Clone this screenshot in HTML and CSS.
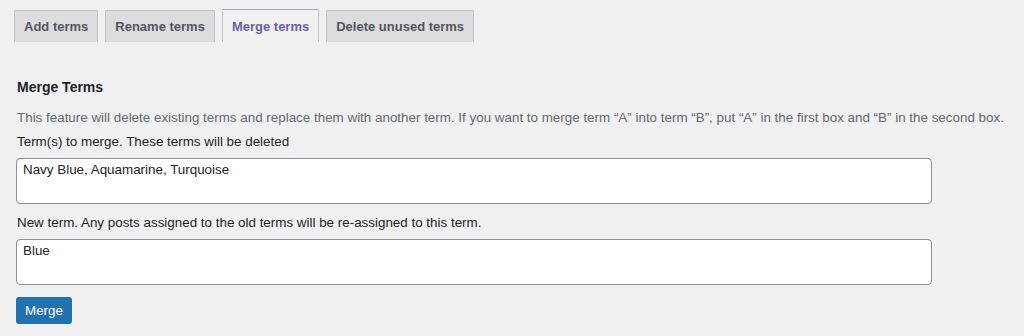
FILE: index.html
```html
<!DOCTYPE html>
<html>
<head>
    <title>Merge terms</title>
    <meta charset="UTF-8">
    <link rel="stylesheet" href="styles.css">
</head>
<body>
    <div class="wrap">
        <nav class="nav-tab-wrapper">
            <a class="nav-tab" href="#">Add terms</a>
            <a class="nav-tab" href="#">Rename terms</a>
            <a class="nav-tab nav-tab-active" href="#">Merge terms</a>
            <a class="nav-tab" href="#">Delete unused terms</a>
        </nav>

        <form class="merge-form">
            <h2>Merge Terms</h2>
            <p class="description">This feature will delete existing terms and replace them with another term. If you want to merge term “A” into term “B”, put “A” in the first box and “B” in the second box.</p>
            <label for="oldTerms">Term(s) to merge. These terms will be deleted</label>
            <textarea id="oldTerms">Navy Blue, Aquamarine, Turquoise</textarea>
            <label for="newTerm">New term. Any posts assigned to the old terms will be re-assigned to this term.</label>
            <textarea id="newTerm">Blue</textarea>
            <button type="submit" class="button-primary">Merge</button>
        </form>
    </div>
</body>
</html>
```

FILE: styles.css
```css
body {
    margin: 0;
    background-color: #f0f0f1;
    color: #1d2327;
    font-family: "Liberation Sans", Arial, sans-serif;
    font-size: 13.4px;
}
.wrap {
    padding: 9px 16px 0 14px;
}
.nav-tab-wrapper {
    display: flex;
    align-items: flex-end;
    gap: 7px;
}
.nav-tab {
    display: block;
    padding: 7px 9px 7px;
    line-height: 17px;
    font-size: 13px;
    font-weight: bold;
    color: #50575e;
    text-decoration: none;
    background-color: #dcdcde;
    border: 1px solid #c3c4c7;
    border-bottom: none;
}
.nav-tab-active {
    background-color: #f0f0f1;
    color: #6a5ea7;
    padding-top: 8px;
    border-top-color: #a7a3c9;
}
.merge-form {
    display: flex;
    flex-direction: column;
    align-items: flex-start;
    padding: 0 2px;
}
.merge-form h2 {
    margin: 35px 0 0 1px;
    font-size: 14px;
    line-height: 20px;
}
.description {
    margin: 12px 0 0 1px;
    color: #646970;
    line-height: 18px;
}
label {
    margin: 6px 0 0 1px;
    line-height: 18px;
}
textarea {
    box-sizing: border-box;
    width: 916px;
    height: 46px;
    margin-top: 7px;
    padding: 2px 6px;
    border: 1px solid #8c8f94;
    border-radius: 4px;
    background-color: white;
    color: #1d2327;
    font-family: inherit;
    font-size: 13.4px;
    line-height: 18px;
    resize: none;
}
textarea + label {
    margin-top: 10px;
}
.button-primary {
    margin-top: 12px;
    padding: 0 8px;
    height: 27px;
    border: 1px solid #2271b1;
    border-radius: 3px;
    background-color: #2271b1;
    color: white;
    font-family: inherit;
    font-size: 13.4px;
    cursor: pointer;
}
```
